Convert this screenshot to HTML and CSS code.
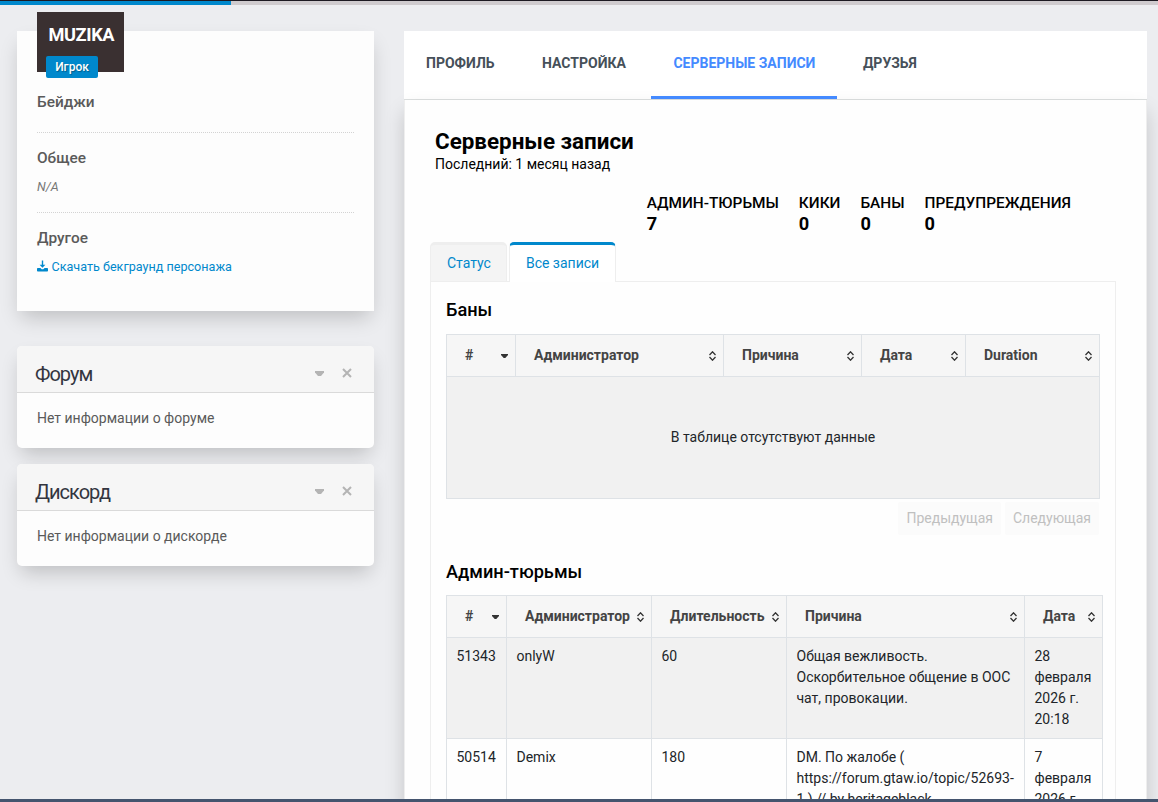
FILE: index.html
```html
<!DOCTYPE html>
<html lang="ru">
<head>
    <meta charset="UTF-8">
    <meta name="viewport" content="width=device-width, initial-scale=1.0">
    <title>MUZIKA</title>
    <link rel="stylesheet" href="styles.css">
</head>
<body>

<svg class="sprite">
    <symbol id="sort" viewBox="0 0 8 10">
        <path d="M0.5 4L3.500 0.8L6.500 4M0.5 6L3.500 9.200L6.500 6" fill="none" stroke="#333" stroke-width="1.3"/>
    </symbol>
    <symbol id="sort-down" viewBox="0 0 8 10">
        <path d="M0 3h7v1L4.300 7H2.700L0 4z" fill="#333"/>
    </symbol>
    <symbol id="caret" viewBox="0 0 10 6">
        <path d="M0 0h9v1.600L6 5H3L0 1.600z" fill="#b4b4b4"/>
    </symbol>
    <symbol id="close" viewBox="0 0 10 10">
        <path d="M1 1l8 8M9 1L1 9" stroke="#b4b4b4" stroke-width="2"/>
    </symbol>
    <symbol id="download" viewBox="0 0 11 12">
        <path d="M4.8 0.5h1.4v4.3H8.4L5.5 7.8L2.6 4.8H4.8z" fill="#08c"/>
        <path d="M0.8 8h2.6l1.3 1.2h1.6L7.6 8h2.6q0.8 0 0.8 0.8v1.9q0 0.8-0.8 0.8H0.8q-0.8 0-0.8-0.8V8.800q0-0.8 0.8-0.8z" fill="#08c"/>
    </symbol>
</svg>

<div class="progress"><div class="progress-bar"></div></div>

<div class="page">
    <aside class="sidebar">
        <section class="card profile">
            <div class="avatar">
                <span class="name">MUZIKA</span>
                <span class="role">Игрок</span>
            </div>
            <h5>Бейджи</h5>
            <hr>
            <h5>Общее</h5>
            <p class="empty">N/A</p>
            <hr>
            <h5>Другое</h5>
            <a class="download" href="#"><svg><use href="#download"/></svg>Скачать бекграунд персонажа</a>
        </section>

        <section class="card panel">
            <header>
                <h2>Форум</h2>
                <svg class="caret"><use href="#caret"/></svg>
                <svg class="close"><use href="#close"/></svg>
            </header>
            <p>Нет информации о форуме</p>
        </section>

        <section class="card panel">
            <header>
                <h2>Дискорд</h2>
                <svg class="caret"><use href="#caret"/></svg>
                <svg class="close"><use href="#close"/></svg>
            </header>
            <p>Нет информации о дискорде</p>
        </section>
    </aside>

    <main class="content">
        <nav class="nav">
            <a href="#">ПРОФИЛЬ</a>
            <a href="#">НАСТРОЙКА</a>
            <a href="#" class="active">СЕРВЕРНЫЕ ЗАПИСИ</a>
            <a href="#">ДРУЗЬЯ</a>
        </nav>

        <div class="records">
            <h1>Серверные записи</h1>
            <p class="last">Последний: 1 месяц назад</p>

            <div class="stats">
                <div>АДМИН-ТЮРЬМЫ<b>7</b></div>
                <div>КИКИ<b>0</b></div>
                <div>БАНЫ<b>0</b></div>
                <div>ПРЕДУПРЕЖДЕНИЯ<b>0</b></div>
            </div>

            <div class="tabs">
                <a href="#">Статус</a>
                <a href="#" class="active">Все записи</a>
            </div>

            <div class="tab-content">
                <h4>Баны</h4>
                <table class="bans">
                    <colgroup><col class="c1"><col class="c2"><col class="c3"><col class="c4"><col></colgroup>
                    <thead>
                    <tr>
                        <th><div>#<svg><use href="#sort-down"/></svg></div></th>
                        <th><div>Администратор<svg><use href="#sort"/></svg></div></th>
                        <th><div>Причина<svg><use href="#sort"/></svg></div></th>
                        <th><div>Дата<svg><use href="#sort"/></svg></div></th>
                        <th><div>Duration<svg><use href="#sort"/></svg></div></th>
                    </tr>
                    </thead>
                    <tbody>
                    <tr>
                        <td colspan="5" class="no-data">В таблице отсутствуют данные</td>
                    </tr>
                    </tbody>
                </table>
                <div class="pager">
                    <span>Предыдущая</span>
                    <span>Следующая</span>
                </div>

                <h4>Админ-тюрьмы</h4>
                <table class="jails">
                    <colgroup><col class="c1"><col class="c2"><col class="c3"><col class="c4"><col></colgroup>
                    <thead>
                    <tr>
                        <th><div>#<svg><use href="#sort-down"/></svg></div></th>
                        <th><div>Администратор<svg><use href="#sort"/></svg></div></th>
                        <th><div>Длительность<svg><use href="#sort"/></svg></div></th>
                        <th><div>Причина<svg><use href="#sort"/></svg></div></th>
                        <th><div>Дата<svg><use href="#sort"/></svg></div></th>
                    </tr>
                    </thead>
                    <tbody>
                    <tr>
                        <td>51343</td>
                        <td>onlyW</td>
                        <td>60</td>
                        <td>Общая вежливость.<br>Оскорбительное общение в ООС<br>чат, провокации.</td>
                        <td>28<br>февраля<br>2026 г.<br>20:18</td>
                    </tr>
                    <tr>
                        <td>50514</td>
                        <td>Demix</td>
                        <td>180</td>
                        <td>DM. По жалобе (<br>https://forum.gtaw.io/topic/52693-<br>1 ) // by heritageblack</td>
                        <td>7<br>февраля<br>2026 г.</td>
                    </tr>
                    </tbody>
                </table>
            </div>
        </div>
    </main>
</div>

<div class="bottom-line"></div>

</body>
</html>
```
FILE: styles.css
```css
* {
    box-sizing: border-box;
}

body {
    display: flex;
    flex-direction: column;
    height: 802px;
    margin: 0;
    overflow: hidden;
    background-color: #ecedf0;
    color: #212529;
    font-family: Roboto, "Liberation Sans", sans-serif;
    font-size: 14px;
    line-height: 21px;
}

h1, h2, h4, h5, p {
    margin: 0;
}

a {
    color: #08c;
    text-decoration: none;
}

.sprite {
    display: none;
}

.progress {
    flex: none;
    height: 5px;
    border-top: 1px solid #1d1a22;
    background-color: #cfcbce;
}

.progress-bar {
    width: 231px;
    height: 4px;
    background-color: #08c;
}

.page {
    display: flex;
    flex: 1;
    gap: 30px;
    min-height: 0;
    padding: 26px 11px 0 17px;
    overflow: hidden;
}

.bottom-line {
    flex: none;
    height: 3px;
    background-color: #44546e;
}

/* Sidebar */
.sidebar {
    flex: none;
    width: 357px;
}

.card {
    background-color: #fdfdfd;
    box-shadow: 0 10px 20px -4px rgba(0, 0, 0, 0.2);
}

.profile {
    display: flow-root;
    height: 280px;
    margin-bottom: 35px;
    padding: 0 20px;
}

.avatar {
    position: relative;
    width: 87px;
    height: 60px;
    margin-top: -19px;
    margin-bottom: 19px;
    padding: 12px 0 0 11.5px;
    background-color: #3a3031;
    color: #fff;
}

.avatar .name {
    font-size: 18.2px;
    font-weight: 700;
    letter-spacing: -0.4px;
}

.avatar .role {
    position: absolute;
    left: 9px;
    bottom: -6px;
    width: 52px;
    height: 22px;
    border-radius: 2px;
    background-color: #08c;
    font-size: 12px;
    font-weight: 500;
    line-height: 22px;
    text-align: center;
    text-shadow: 1px 1px 1px rgba(0, 0, 0, 0.3);
}

h5 {
    color: #5a5a5a;
    font-size: 15.4px;
    font-weight: 500;
    line-height: 22px;
}

hr {
    margin: 19px 0 14px;
    border: 0;
    border-top: 1px dotted #d3d3d3;
}

.empty {
    margin-top: 7px;
    color: #777;
    font-size: 12.6px;
    font-style: italic;
}

.empty + hr {
    margin-top: 15px;
}

.download {
    display: flex;
    align-items: center;
    gap: 3.5px;
    margin-top: 7px;
    font-size: 12.6px;
}

.download svg {
    width: 11px;
    height: 12px;
    margin-top: -2px;
}

.panel {
    height: 102px;
    margin-bottom: 16px;
    border-radius: 5px;
}

.panel header {
    display: flex;
    align-items: center;
    height: 47px;
    padding: 8px 22px 0 18px;
    border-bottom: 1px solid #dadada;
    border-radius: 5px 5px 0 0;
    background-color: #f6f6f6;
}

.panel h2 {
    flex: 1;
    padding-top: 3px;
    color: #33353f;
    font-size: 20px;
    font-weight: 400;
    letter-spacing: -1px;
}

.panel .caret {
    width: 10px;
    height: 6px;
    margin-right: 17px;
    margin-top: 2px;
}

.panel .close {
    width: 10px;
    height: 10px;
}

.panel p {
    padding: 15px 20px;
    color: #5a5a5a;
}

/* Content */
.content {
    flex: 1;
    min-width: 0;
}

.nav {
    display: flex;
    gap: 3.5px;
    height: 69px;
    border-bottom: 1px solid #dcdfdf;
    background-color: #fff;
}

.nav a {
    padding: 22px 22px 0;
    border-bottom: 3px solid transparent;
    color: #465059;
    font-weight: 700;
}

.nav .active {
    border-color: #448aff;
    color: #448aff;
}

.records {
    height: 1000px;
    padding: 30px 30px 0 25px;
    border: 1px solid #eee;
    border-top: 0;
    background-color: #fefefe;
    box-shadow: 0 10px 20px -2px rgba(0, 0, 0, 0.2);
}

h1 {
    padding-left: 5px;
    color: #000;
    font-size: 22.4px;
    font-weight: 700;
    line-height: 23px;
}

.last {
    margin-top: 1px;
    padding-left: 5px;
    color: #000;
}

.stats {
    display: flex;
    justify-content: flex-end;
    gap: 20px;
    padding: 18px 45px 8px 0;
    color: #000;
    font-size: 15.4px;
    font-weight: 500;
}

.stats b {
    display: block;
    margin-top: -1px;
    font-size: 18.2px;
    font-weight: 700;
}

.tabs {
    display: flex;
    gap: 2px;
    height: 39px;
}

.tabs a {
    height: 39px;
    padding: 8px 15.5px 0 16px;
    border: 1px solid #eee;
    border-top: 3px solid #eee;
    border-bottom: 0;
    border-radius: 5px 5px 0 0;
    background-color: #f4f4f4;
}

.tabs .active {
    height: 40px;
    padding-left: 15.5px;
    border-top-color: #08c;
    background-color: #fff;
    z-index: 1;
}

.tab-content {
    height: 800px;
    padding: 17px 15px;
    border: 1px solid #eee;
    background-color: #fefefe;
}

h4 {
    color: #000;
    font-size: 18.2px;
    font-weight: 500;
    line-height: 21px;
}

table {
    table-layout: fixed;
    border-collapse: collapse;
    margin-top: 14px;
}

th, td {
    border: 1px solid #dee2e6;
    text-align: left;
    vertical-align: top;
}

th {
    height: 42px;
    padding: 0 6.5px 0 18px;
    background-color: #f6f6f6;
    color: #444;
    font-weight: 700;
    vertical-align: middle;
}

th div {
    display: flex;
    align-items: center;
    justify-content: space-between;
}

th svg {
    flex: none;
    width: 8px;
    height: 10px;
}

td {
    padding: 8px 9.5px;
    white-space: nowrap;
}

tbody tr:nth-child(odd) {
    background-color: #f1f1f1;
}

.bans {
    width: 654px;
}

.bans .c1 { width: 69px; }
.bans .c2 { width: 208px; }
.bans .c3 { width: 138px; }
.bans .c4 { width: 104px; }

.jails {
    width: 657px;
    margin-top: 13px;
}

.jails .c1 { width: 60px; }
.jails .c2 { width: 145px; }
.jails .c3 { width: 135px; }
.jails .c4 { width: 238px; }

.no-data {
    height: 122px;
    text-align: center;
    vertical-align: middle;
}

.pager {
    display: flex;
    justify-content: flex-end;
    gap: 4px;
    margin: 3px 1px 26px;
    color: #c0c0c0;
}

.pager span {
    height: 33px;
    padding: 6px 8px;
    border-radius: 2px;
    background-color: #fbfbfb;
}
```
